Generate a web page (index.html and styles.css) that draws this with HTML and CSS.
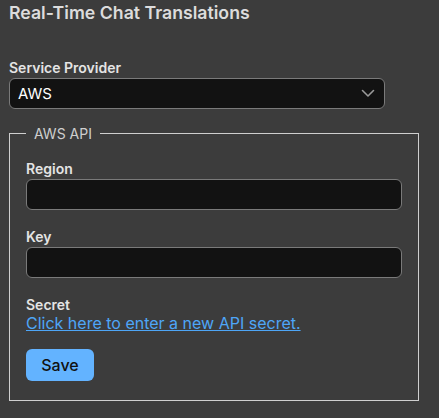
FILE: index.html
```html
<!DOCTYPE html>
<html>
<head>
<meta charset="utf-8">
<link rel="stylesheet" href="styles.css">
</head>
<body>
<div class="page">
  <h1 class="title">Real-Time Chat Translations</h1>
  <div class="field provider">
    <label class="label">Service Provider</label>
    <div class="select-wrap">
      <div class="select">AWS</div>
      <svg class="chevron" width="14" height="9" viewBox="0 0 14 9"><path d="M1.5 1.5 L7 7 L12.5 1.5" fill="none" stroke="#9a9a9a" stroke-width="1.6" stroke-linecap="round" stroke-linejoin="round"/></svg>
    </div>
  </div>
  <fieldset class="group">
    <legend class="legend">AWS API</legend>
    <div class="field">
      <label class="label">Region</label>
      <input class="input" type="text">
    </div>
    <div class="field">
      <label class="label">Key</label>
      <input class="input" type="text">
    </div>
    <div class="field secret">
      <label class="label">Secret</label>
      <a class="link" href="#">Click here to enter a new API secret.</a>
    </div>
    <button class="save">Save</button>
  </fieldset>
</div>
</body>
</html>
```
FILE: styles.css
```css
html, body {
  margin: 0;
  padding: 0;
  background: #3c3c3c;
}
body {
  font-family: Inter, "Liberation Sans", sans-serif;
  color: #e2e2e2;
}
.page {
  padding: 0 9px;
  width: 410px;
}
.title {
  font-size: 17.7px;
  font-weight: 600;
  line-height: 20px;
  margin: 3px 0 0;
  color: #dcdcdc;
}
.field {
  display: flex;
  flex-direction: column;
}
.provider {
  margin-top: 36px;
}
.label {
  font-size: 14px;
  font-weight: 600;
  line-height: 17px;
  color: #e4e4e4;
  margin-bottom: 2px;
}
.select-wrap {
  position: relative;
  width: 376px;
}
.select {
  box-sizing: border-box;
  height: 31px;
  background: #121212;
  border: 1px solid #7a7a7a;
  border-radius: 6px;
  color: #ffffff;
  font-size: 15px;
  line-height: 29px;
  padding-left: 8px;
}
.chevron {
  position: absolute;
  right: 10px;
  top: 11px;
}
.group {
  margin: 16px 0 0;
  border: 1px solid #cfcfcf;
  padding: 18px 16px 19px;
  width: 376px;
}
.legend {
  padding: 0 8px;
  font-size: 14px;
  color: #cfcfcf;
  line-height: 17px;
}
.input {
  box-sizing: border-box;
  height: 31px;
  background: #121212;
  border: 1px solid #7a7a7a;
  border-radius: 6px;
  margin: 0;
  width: 376px;
}
.field + .field {
  margin-top: 18px;
}
.secret {
  margin-top: 18px !important;
}
.secret .label {
  margin-bottom: 0;
}
.link {
  color: #4ea6f7;
  font-size: 16px;
  line-height: 20px;
  text-decoration: underline;
}
.save {
  margin-top: 16px;
  width: 68px;
  height: 32px;
  background: #63b3ff;
  border: none;
  border-radius: 6px;
  font-family: Inter, "Liberation Sans", sans-serif;
  font-size: 16px;
  font-weight: 500;
  color: #111;
  padding: 0;
}
```
